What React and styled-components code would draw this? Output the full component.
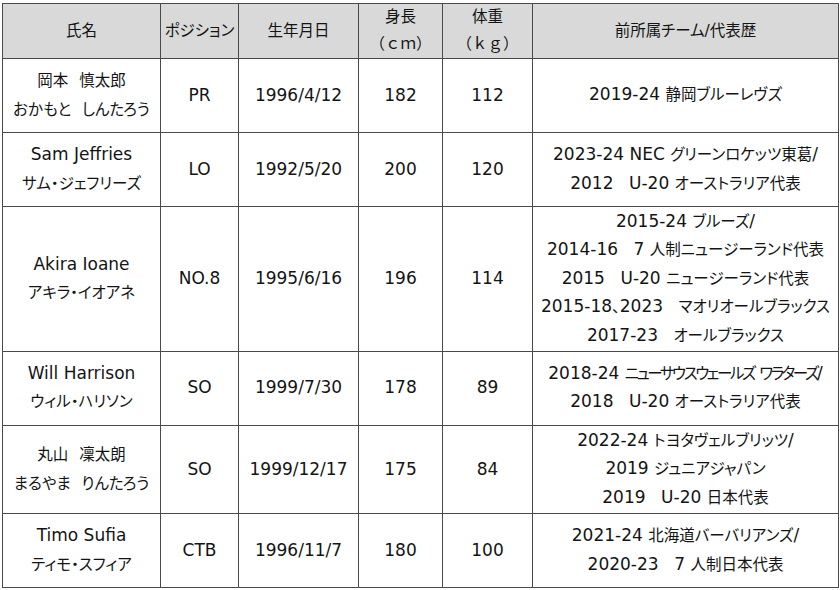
import React from 'react';
import styled, { createGlobalStyle } from 'styled-components';

const GlobalStyle = createGlobalStyle`
	html, body {
		margin: 0;
		padding: 0;
		background: #ffffff;
	}
	body {
		font-family: "DejaVu Sans", "Noto Sans CJK JP", sans-serif;
		color: #141414;
	}
`;

const columns = [158, 78, 120, 84, 90, 306];

const headers = [
	['氏名'],
	['ポジション'],
	['生年月日'],
	['身長', '（ｃｍ）'],
	['体重', '（ｋｇ）'],
	['前所属チーム/代表歴'],
];

const players = [
	{
		name: ['岡本  慎太郎', 'おかもと  しんたろう'],
		pos: 'PR',
		birth: '1996/4/12',
		height: '182',
		weight: '112',
		career: ['2019-24 静岡ブルーレヴズ'],
	},
	{
		name: ['Sam Jeffries', 'サム・ジェフリーズ'],
		pos: 'LO',
		birth: '1992/5/20',
		height: '200',
		weight: '120',
		career: ['2023-24 NEC グリーンロケッツ東葛/', '2012　U-20 オーストラリア代表'],
	},
	{
		name: ['Akira Ioane', 'アキラ・イオアネ'],
		pos: 'NO.8',
		birth: '1995/6/16',
		height: '196',
		weight: '114',
		career: [
			'2015-24 ブルーズ/',
			'2014-16　7 人制ニュージーランド代表',
			'2015　U-20 ニュージーランド代表',
			'2015-18、2023　マオリオールブラックス',
			'2017-23　オールブラックス',
		],
	},
	{
		name: ['Will Harrison', 'ウィル・ハリソン'],
		pos: 'SO',
		birth: '1999/7/30',
		height: '178',
		weight: '89',
		career: [
			{ text: '2018-24 ニューサウスウェールズ ワラターズ/', tight: true },
			'2018　U-20 オーストラリア代表',
		],
	},
	{
		name: ['丸山  凜太朗', 'まるやま  りんたろう'],
		pos: 'SO',
		birth: '1999/12/17',
		height: '175',
		weight: '84',
		career: ['2022-24 トヨタヴェルブリッツ/', '2019 ジュニアジャパン', '2019　U-20 日本代表'],
	},
	{
		name: ['Timo Sufia', 'ティモ・スフィア'],
		pos: 'CTB',
		birth: '1996/11/7',
		height: '180',
		weight: '100',
		career: ['2021-24 北海道バーバリアンズ/', '2020-23　7 人制日本代表'],
	},
];

// latin runs are drawn a bit larger than the kana/kanji runs
function Mixed({ text, tight }) {
	const parts = text.split(/([\x20-\x7E]+)/).filter(Boolean);
	return parts.map((t, i) =>
		/^[\x20-\x7E]+$/.test(t) ? (
			<Latin key={i}>{t}</Latin>
		) : (
			<Wide key={i} $tight={tight}>
				{t}
			</Wide>
		)
	);
}

export default function App() {
	return (
		<Page>
			<GlobalStyle />
			<Table>
				<colgroup>
					{columns.map((w, i) => (
						<col key={i} style={{ width: w }} />
					))}
				</colgroup>
				<thead>
					<tr>
						{headers.map((lines, i) => (
							<HeadCell key={i}>
								{lines.map((l, j) => (
									<HeadLine key={j} $unit={j > 0}>
										{l}
									</HeadLine>
								))}
							</HeadCell>
						))}
					</tr>
				</thead>
				<tbody>
					{players.map((p, i) => (
						<tr key={i}>
							<Cell>
								<Line><Mixed text={p.name[0]} /></Line>
								<Line><Mixed text={p.name[1]} /></Line>
							</Cell>
							<Cell><Latin>{p.pos}</Latin></Cell>
							<Cell><Latin>{p.birth}</Latin></Cell>
							<Cell><Latin>{p.height}</Latin></Cell>
							<Cell><Latin>{p.weight}</Latin></Cell>
							<Cell>
								{p.career.map((c, j) => {
									const item = typeof c === 'string' ? { text: c } : c;
									return (
										<Line key={j}>
											<Mixed text={item.text} tight={item.tight} />
										</Line>
									);
								})}
							</Cell>
						</tr>
					))}
				</tbody>
			</Table>
		</Page>
	);
}

const Page = styled.div`
	padding: 3px 2px 0 2px;
	width: 840px;
	box-sizing: border-box;
`;

const Table = styled.table`
	border-collapse: collapse;
	table-layout: fixed;
	width: 836px;
`;

const HeadCell = styled.th`
	background: #d9d9d9;
	border: 1px solid #4a4a4a;
	height: 53px;
	padding: 0;
	font-weight: normal;
	font-size: 15.5px;
	line-height: 27px;
	text-align: center;
	vertical-align: middle;
`;

const HeadLine = styled.div`
	white-space: nowrap;
	font-feature-settings: ${(p) => (p.$unit ? 'normal' : '"palt"')};
`;

const Cell = styled.td`
	border: 1px solid #4a4a4a;
	height: 71px;
	padding: 1px 0;
	font-size: 15px;
	text-align: center;
	vertical-align: middle;
	white-space: nowrap;
`;

const Line = styled.div`
	white-space: pre;
	line-height: 28.4px;
	height: 28.4px;
`;

const Latin = styled.span`
	font-size: 17px;
	line-height: 1;
`;

const Wide = styled.span`
	font-size: 15.5px;
	line-height: 1;
	font-feature-settings: "palt";
	letter-spacing: ${(p) => (p.$tight ? '-2.4px' : '0')};
`;
